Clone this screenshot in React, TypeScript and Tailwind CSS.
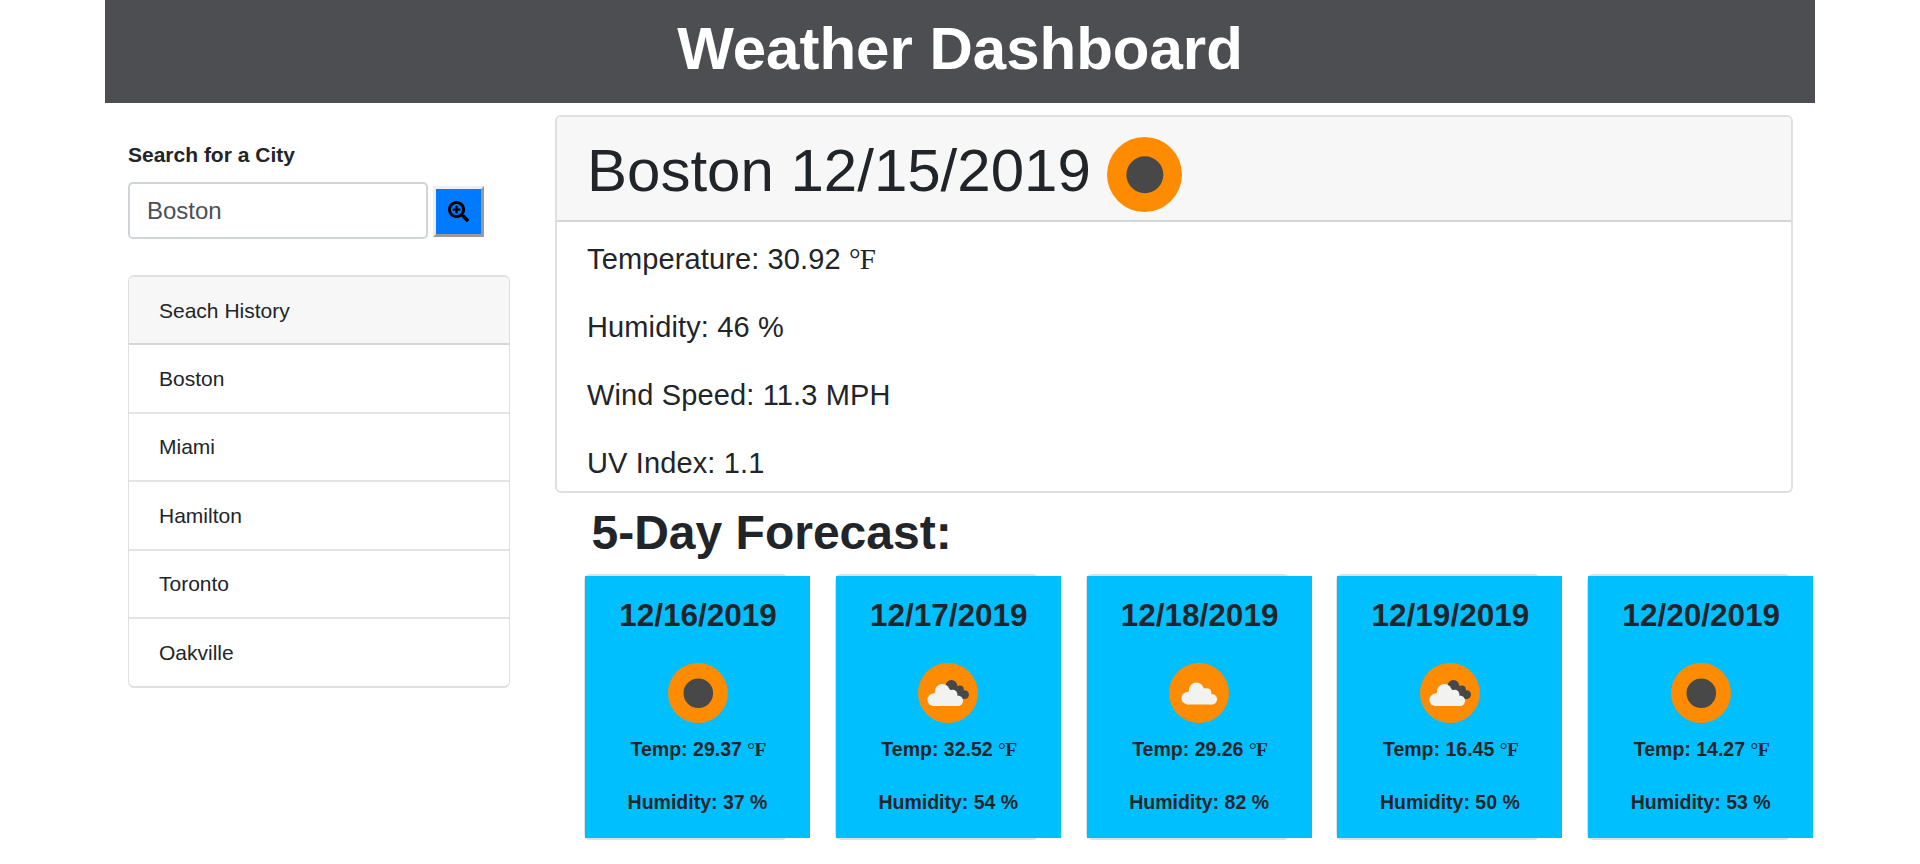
import { FaSearchPlus } from "react-icons/fa";

type Sky = "clear" | "broken" | "cloudy";

const FORECAST: { date: string; sky: Sky; temp: string; humidity: string }[] = [
  { date: "12/16/2019", sky: "clear", temp: "29.37", humidity: "37" },
  { date: "12/17/2019", sky: "broken", temp: "32.52", humidity: "54" },
  { date: "12/18/2019", sky: "cloudy", temp: "29.26", humidity: "82" },
  { date: "12/19/2019", sky: "broken", temp: "16.45", humidity: "50" },
  { date: "12/20/2019", sky: "clear", temp: "14.27", humidity: "53" },
];

const CITIES = ["Boston", "Miami", "Hamilton", "Toronto", "Oakville"];

function Cloud() {
  return (
    <g fill="#f2f2f0">
      <circle cx="15.6" cy="36.8" r="6.2" />
      <circle cx="24.4" cy="28.6" r="7.5" />
      <circle cx="34.8" cy="31.4" r="4.6" />
      <circle cx="39.9" cy="37.8" r="5.2" />
      <path d="M15.6 30.6L24 24L36 28L40 35V43H15.6z" />
    </g>
  );
}

function SkyIcon({ sky, className }: { sky: Sky; className: string }) {
  return (
    <svg viewBox="0 0 60 60" className={className}>
      <circle cx="30" cy="30" r="30" fill="#ff8c00" />
      {sky === "clear" && <circle cx="30.3" cy="30.2" r="14.8" fill="#484849" />}
      {sky === "broken" && (
        <>
          <g fill="#484849">
            <circle cx="33.4" cy="23" r="5.9" />
            <circle cx="42" cy="26.2" r="3.8" />
            <circle cx="46.6" cy="31.6" r="4.4" />
            <path d="M33 20L42 24L47 31L46 36H36z" />
          </g>
          <Cloud />
        </>
      )}
      {sky === "cloudy" && (
        <g transform="translate(3 -1.6)">
          <Cloud />
        </g>
      )}
    </svg>
  );
}

function Fahrenheit() {
  return (
    <span className="font-['Liberation_Serif','Times_New_Roman',serif]">
      <span className="font-normal tracking-[-0.03em]">°</span>F
    </span>
  );
}

export default function App() {
  return (
    <div className="h-[864px] overflow-hidden bg-white font-['Liberation_Sans',Arial,sans-serif] text-[21px] leading-[31.5px] text-[#212529]">
      <div className="mx-auto w-[1710px]">
        <header className="h-[103px] bg-[#4d4e52] pt-[13px] text-center text-[60px] leading-[72px] font-bold text-white">
          <h1>Weather Dashboard</h1>
        </header>

        <div className="flex">
          <aside className="w-[405px] shrink-0 pt-[36px] pl-[23px]">
            <label htmlFor="city" className="block leading-[31px] font-bold">
              Search for a City
            </label>
            <div className="mt-[12px] flex items-center">
              <input
                id="city"
                defaultValue="Boston"
                className="h-[57px] w-[300px] rounded-[5px] border-2 border-[#ced4da] bg-white px-[17px] text-[24px] text-[#495057] outline-none"
              />
              <button className="mt-[2px] ml-[5px] flex h-[51px] w-[51px] items-center justify-center border-[3px] border-t-[#efefef] border-r-[#9a9a9a] border-b-[#9a9a9a] border-l-[#efefef] bg-[#007bff] text-black">
                <FaSearchPlus size={21} />
              </button>
            </div>
            <div className="mt-[36px] w-[382px] overflow-hidden rounded-[6px] border border-t-2 border-b-2 border-[#dfdfdf]">
              <div className="h-[68px] border-b-2 border-[#d6d6d6] bg-[#f7f7f7] pt-[18px] pl-[30px]">Seach History</div>
              <ul>
                {CITIES.map((city) => (
                  <li
                    key={city}
                    className="h-[68.5px] border-b-2 border-[#e4e4e4] pt-[17.8px] pl-[30px] last:h-[67px] last:border-b-0"
                  >
                    {city}
                  </li>
                ))}
              </ul>
            </div>
          </aside>

          <main className="pt-[12px] pl-[45px]">
            <section className="h-[378px] w-[1238px] rounded-[6px] border-2 border-[#dfdfdf]">
              <div className="flex h-[105px] items-start rounded-t-[4px] border-b-2 border-[#d6d6d6] bg-[#f7f7f7] pl-[30px] text-[60px] leading-[72px]">
                <h2 className="pt-[18px]">Boston 12/15/2019</h2>
                <SkyIcon sky="clear" className="mt-[20px] ml-[16px] size-[75px]" />
              </div>
              <div className="flex flex-col gap-[24px] pt-[15px] pl-[30px] text-[29px] leading-[44px] tracking-[0.13px]">
                <p>
                  Temperature: 30.92 <Fahrenheit />
                </p>
                <p>Humidity: 46 %</p>
                <p>Wind Speed: 11.3 MPH</p>
                <p>UV Index: 1.1</p>
              </div>
            </section>

            <h2 className="mt-[11px] pl-[36.5px] text-[48px] leading-[57px] font-bold">5-Day Forecast:</h2>

            <div className="mt-[13px] flex gap-[46.8px] pl-[29px]">
              {FORECAST.map((day) => (
                <article
                  key={day.date}
                  className="h-[266px] w-[204px] shrink-0 rounded-[6px] border-x border-y-2 border-[#dfdfdf] text-center font-bold"
                >
                  <div className="flex h-[262px] w-[225px] flex-col items-center bg-[#00bfff]">
                    <h3 className="mt-[20px] pl-px text-[31.5px] leading-[38px]">{day.date}</h3>
                    <SkyIcon sky={day.sky} className="mt-[29px] size-[60px]" />
                    <p className="mt-[12px] pl-[2px] text-[19.5px] leading-[29px]">
                      Temp: {day.temp} <Fahrenheit />
                    </p>
                    <p className="mt-[24px] text-[19.5px] leading-[29px]">Humidity: {day.humidity} %</p>
                  </div>
                </article>
              ))}
            </div>
          </main>
        </div>
      </div>
    </div>
  );
}
